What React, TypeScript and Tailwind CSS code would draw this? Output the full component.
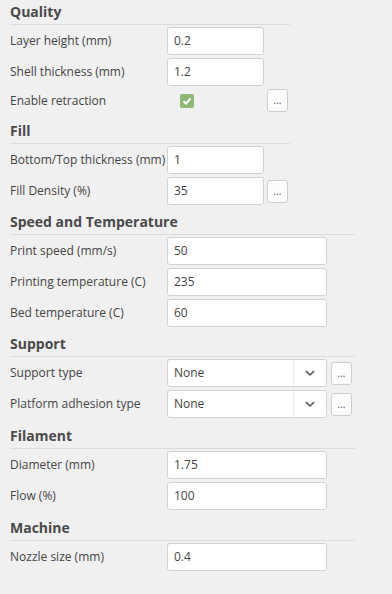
import React from "react";

const font = { fontFamily: '"Open Sans", "Liberation Sans", sans-serif' };

function Header({ title, width, mt }: { title: string; width: string; mt: string }) {
  return (
    <div className={`${mt} ${width} h-[25px] border-b border-[#dcdcdc] flex items-end pb-[4px]`}>
      <span className="text-[14px] font-bold text-[#4a4a4a] leading-[16px]">{title}</span>
    </div>
  );
}

function Dots() {
  return (
    <div className="w-[21px] h-[23px] rounded-[3px] border border-[#cfcfcf] bg-[#fbfcfb] flex items-center justify-center text-[10px] text-[#555] leading-none pb-[1px]">
      ...
    </div>
  );
}

function Label({ children }: { children: React.ReactNode }) {
  return <div className="w-[157px] shrink-0 text-[12px] text-[#454545] leading-none">{children}</div>;
}

function Input({ value, w }: { value: string; w: string }) {
  return (
    <div className={`${w} h-[28px] rounded-[3px] border border-[#d2d2d2] bg-white flex items-center pl-[6px] text-[12px] text-[#444]`}>
      {value}
    </div>
  );
}

function Select({ value }: { value: string }) {
  return (
    <div className="w-[160px] h-[28px] rounded-[3px] border border-[#d2d2d2] bg-white flex items-stretch text-[12px] text-[#444]">
      <div className="flex-1 flex items-center pl-[6px]">{value}</div>
      <div className="w-[33px] border-l border-[#ececec] flex items-center justify-center">
        <svg width="10" height="7" viewBox="0 0 10 7">
          <path d="M1 1.2 L5 5 L9 1.2" fill="none" stroke="#555" strokeWidth="1.6" />
        </svg>
      </div>
    </div>
  );
}

function Row({ label, children, h = "h-[28px]" }: { label: string; children: React.ReactNode; h?: string }) {
  return (
    <div className={`flex items-center ${h}`}>
      <Label>{label}</Label>
      <div className="flex items-center">{children}</div>
    </div>
  );
}

export default function App() {
  return (
    <div className="w-[392px] h-[594px] bg-[#f0f0f0] pl-[10px] overflow-hidden" style={font}>
      <Header title="Quality" width="w-[280px]" mt="mt-0" />
      <div className="flex flex-col gap-[3px] mt-[2px]">
        <Row label="Layer height (mm)">
          <Input value="0.2" w="w-[97px]" />
        </Row>
        <Row label="Shell thickness (mm)">
          <Input value="1.2" w="w-[97px]" />
        </Row>
        <Row label="Enable retraction" h="h-[23px]">
          <div className="w-[100px] flex items-center pl-[13px]">
            <div className="w-[14px] h-[14px] rounded-[2px] bg-[#8fb872] flex items-center justify-center">
              <svg width="10" height="8" viewBox="0 0 10 8">
                <path d="M1.5 4.2 L4 6.5 L8.5 1.5" fill="none" stroke="#fff" strokeWidth="2" />
              </svg>
            </div>
          </div>
          <Dots />
        </Row>
      </div>

      <Header title="Fill" width="w-[280px]" mt="mt-[7px]" />
      <div className="flex flex-col gap-[3px] mt-[2px]">
        <Row label="Bottom/Top thickness (mm)">
          <Input value="1" w="w-[97px]" />
        </Row>
        <Row label="Fill Density (%)">
          <Input value="35" w="w-[97px]" />
          <div className="ml-[3px]">
            <Dots />
          </div>
        </Row>
      </div>

      <Header title="Speed and Temperature" width="w-[345px]" mt="mt-[5px]" />
      <div className="flex flex-col gap-[3px] mt-[2px]">
        <Row label="Print speed (mm/s)">
          <Input value="50" w="w-[160px]" />
        </Row>
        <Row label="Printing temperature (C)">
          <Input value="235" w="w-[160px]" />
        </Row>
        <Row label="Bed temperature (C)">
          <Input value="60" w="w-[160px]" />
        </Row>
      </div>

      <Header title="Support" width="w-[345px]" mt="mt-[5px]" />
      <div className="flex flex-col gap-[3px] mt-[2px]">
        <Row label="Support type">
          <Select value="None" />
          <div className="ml-[4px]">
            <Dots />
          </div>
        </Row>
        <Row label="Platform adhesion type">
          <Select value="None" />
          <div className="ml-[4px]">
            <Dots />
          </div>
        </Row>
      </div>

      <Header title="Filament" width="w-[345px]" mt="mt-[6px]" />
      <div className="flex flex-col gap-[3px] mt-[2px]">
        <Row label="Diameter (mm)">
          <Input value="1.75" w="w-[160px]" />
        </Row>
        <Row label="Flow (%)">
          <Input value="100" w="w-[160px]" />
        </Row>
      </div>

      <Header title="Machine" width="w-[345px]" mt="mt-[6px]" />
      <div className="flex flex-col gap-[3px] mt-[2px]">
        <Row label="Nozzle size (mm)">
          <Input value="0.4" w="w-[160px]" />
        </Row>
      </div>
    </div>
  );
}
